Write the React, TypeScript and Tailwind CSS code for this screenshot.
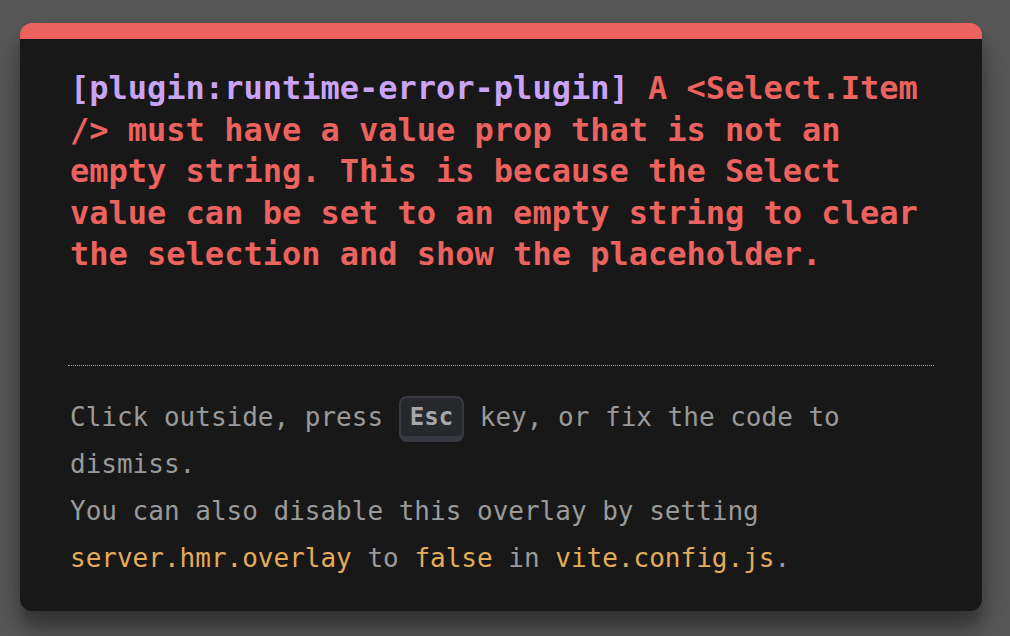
import React from "react";

export default function App() {
  const mono = { fontFamily: '"DejaVu Sans Mono", "Liberation Mono", monospace' };
  return (
    <div className="min-h-[636px] w-full bg-[#585858] pt-[23px] pl-[20px]" style={mono}>
      <div className="w-[962px] h-[588px] rounded-[12px] border-t-[16px] border-[#ec625e] bg-[#181818] px-[50px] pt-[29px] pb-[30px] shadow-[0_19px_38px_rgba(0,0,0,0.30),0_15px_12px_rgba(0,0,0,0.22)]">
        <div className="text-[32px] leading-[1.3] font-bold text-[#ec625e] whitespace-pre">
          <span className="text-[#c9a3f5]">[plugin:runtime-error-plugin]</span>
          {" A <Select.Item\n/> must have a value prop that is not an\nempty string. This is because the Select\nvalue can be set to an empty string to clear\nthe selection and show the placeholder."}
        </div>
        <div className="mt-[89px] -mx-[2px] px-[2px] border-t border-dotted border-[#a0a0a0] pt-[28px] text-[26px] leading-[1.8] text-[#9a9a9a] whitespace-pre">
          {"Click outside, press "}
          <kbd className="inline-block align-middle relative top-[1px] rounded-[8px] border-x-2 border-t-2 border-b-[6px] border-[#363940] bg-[#26282c] px-[9px] text-[24px] leading-[38px] font-bold text-[#a6a7ab]" style={mono}>
            Esc
          </kbd>
          {" key, or fix the code to\ndismiss.\nYou can also disable this overlay by setting\n"}
          <span className="text-[#e3ac59]">server.hmr.overlay</span>
          {" to "}
          <span className="text-[#e3ac59]">false</span>
          {" in "}
          <span className="text-[#e3ac59]">vite.config.js</span>
          {"."}
        </div>
      </div>
    </div>
  );
}
